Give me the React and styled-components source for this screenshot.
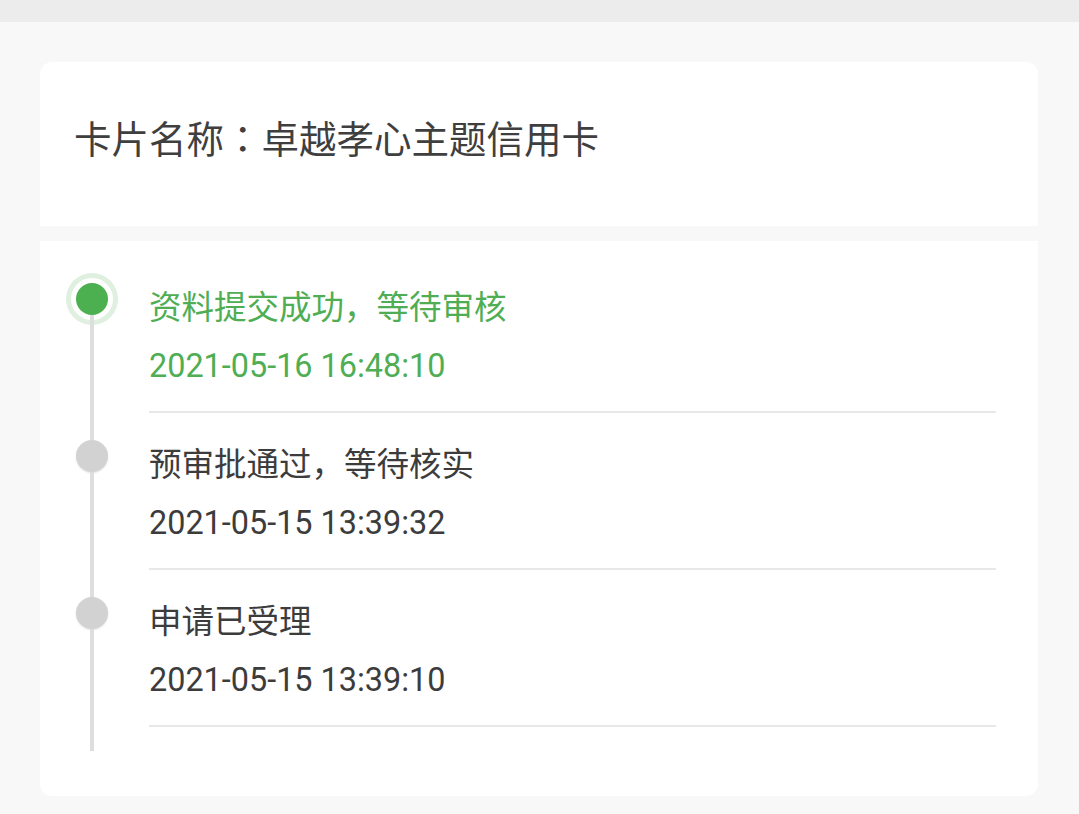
import React from "react";
import styled, { createGlobalStyle } from "styled-components";

const Global = createGlobalStyle`
  html, body { margin: 0; padding: 0; background: #f8f8f8; }
  body { font-family: Roboto, "Noto Sans CJK SC", sans-serif; }
`;

const Page = styled.div`
  width: 1079px;
  min-height: 814px;
  background: #f8f8f8;
  display: flex;
  flex-direction: column;
`;

const StatusBar = styled.div`
  height: 22px;
  background: #ececec;
`;

const Body = styled.div`
  padding: 40px 41px 17px 40px;
  display: flex;
  flex-direction: column;
  gap: 15px;
`;

const HeaderCard = styled.div`
  background: #fff;
  height: 164px;
  border-radius: 12px 12px 0 0;
  display: flex;
  align-items: center;
  padding-left: 34px;
  box-sizing: border-box;
`;

const CardName = styled.div`
  font-family: "Noto Sans CJK SC", sans-serif;
  font-size: 37.5px;
  color: #3f3f3f;
  margin-top: -16px;
`;

const Colon = styled.span`
  font-family: "Noto Sans CJK TC", sans-serif;
`;

const TimelineCard = styled.div`
  background: #fff;
  border-radius: 0 0 12px 12px;
  padding: 39px 42px 45px 0;
  display: flex;
  flex-direction: column;
`;

const Item = styled.div`
  display: grid;
  grid-template-columns: 109px 1fr;
  height: 157px;
`;

const Track = styled.div`
  width: 32px;
  margin-left: 36px;
  display: flex;
  flex-direction: column;
  align-items: center;
`;

const Line = styled.div`
  width: 4px;
  background: ${(p) => (p.$hidden ? "transparent" : "#dedede")};
  height: ${(p) => (p.$grow ? "auto" : "3px")};
  flex: ${(p) => (p.$grow ? 1 : "none")};
`;

const Dot = styled.div`
  width: 32px;
  height: 32px;
  border-radius: 50%;
  flex: none;
  background: ${(p) => (p.$active ? "#4caf50" : "#d2d2d2")};
  box-shadow: ${(p) =>
    p.$active
      ? "0 0 0 5px #ffffff, 0 0 0 10px #e0f0e0"
      : "0 1px 2px rgba(0,0,0,0.12)"};
`;

const Content = styled.div`
  display: flex;
  flex-direction: column;
  padding-top: 4px;
`;

const Title = styled.div`
  font-size: 32.5px;
  line-height: 48px;
  color: ${(p) => (p.$active ? "#4fae53" : "#3c3c3c")};
`;

const Time = styled.div`
  font-family: Roboto, sans-serif;
  font-size: 32.4px;
  line-height: 48px;
  margin-top: 10px;
  color: ${(p) => (p.$active ? "#4fae53" : "#3c3c3c")};
`;

const Divider = styled.div`
  height: 2px;
  background: #e8e8e8;
  margin-top: 21px;
`;

const steps = [
  { title: "资料提交成功，等待审核", time: "2021-05-16 16:48:10", active: true },
  { title: "预审批通过，等待核实", time: "2021-05-15 13:39:32" },
  { title: "申请已受理", time: "2021-05-15 13:39:10" },
];

export default function App() {
  return (
    <Page>
      <Global />
      <StatusBar />
      <Body>
        <HeaderCard>
          <CardName>
            卡片名称<Colon>：</Colon>卓越孝心主题信用卡
          </CardName>
        </HeaderCard>
        <TimelineCard>
          {steps.map((s, i) => (
            <Item key={i}>
              <Track>
                <Line $hidden={i === 0} />
                <Dot $active={s.active} />
                <Line $grow />
              </Track>
              <Content>
                <Title $active={s.active}>{s.title}</Title>
                <Time $active={s.active}>{s.time}</Time>
                <Divider />
              </Content>
            </Item>
          ))}
        </TimelineCard>
      </Body>
    </Page>
  );
}
